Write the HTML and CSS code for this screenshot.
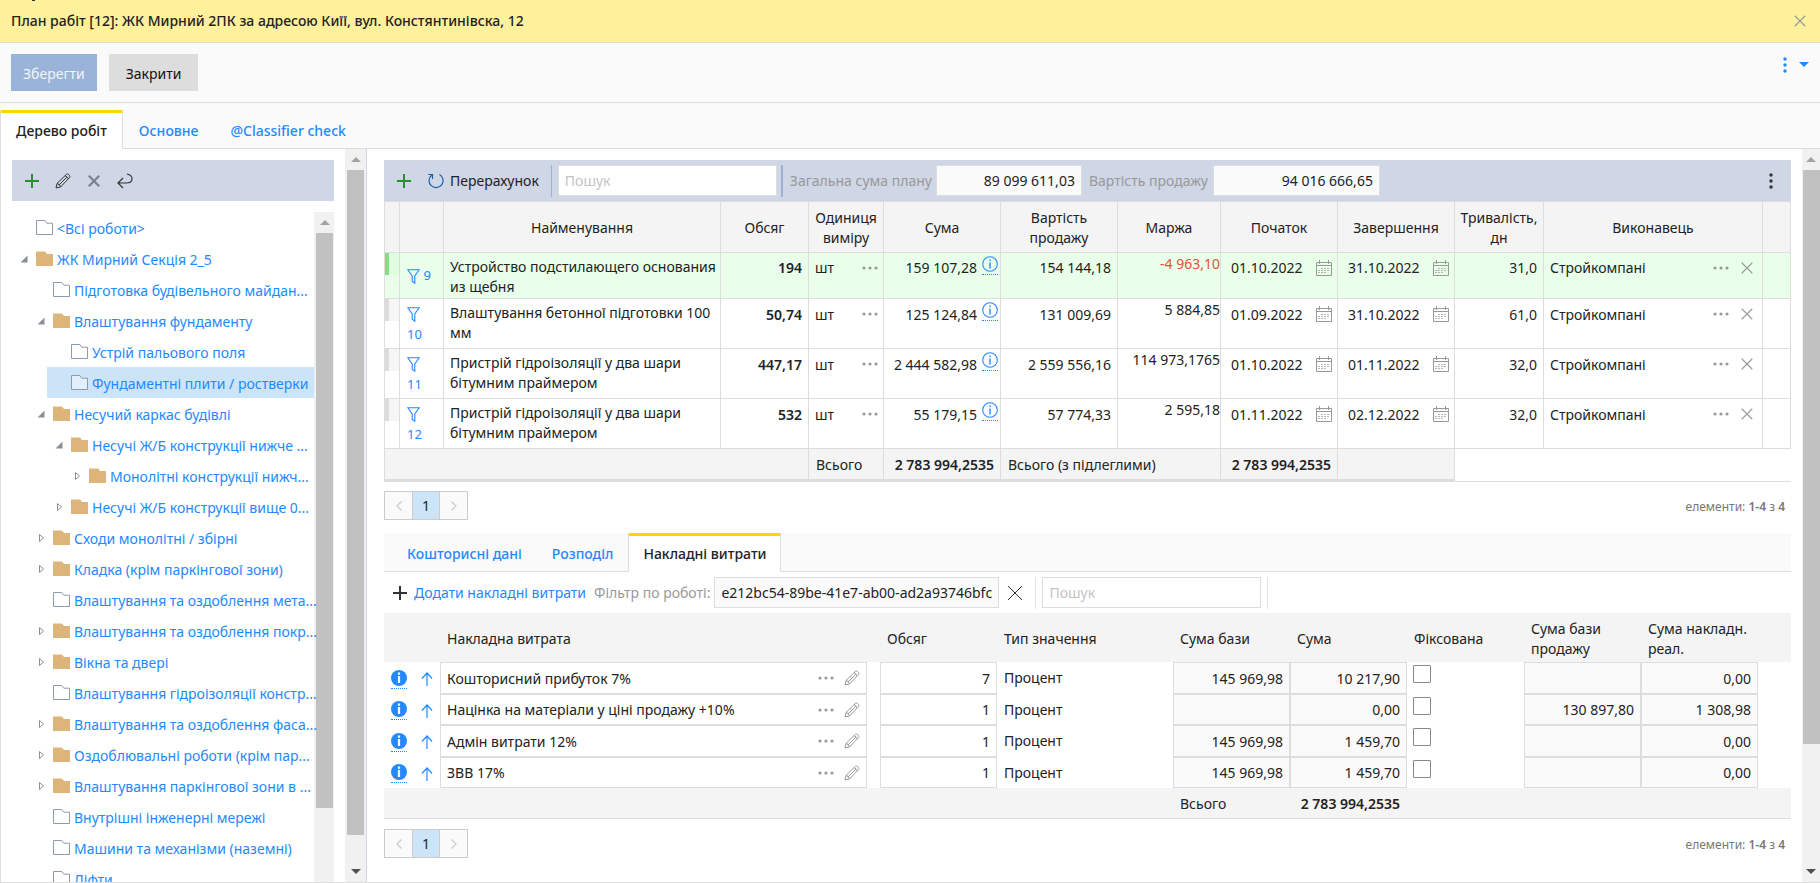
FILE: index.html
```html
<!DOCTYPE html>
<html lang="uk">
<head>
<meta charset="utf-8">
<title>План рабіт [12]</title>
<link rel="stylesheet" href="styles.css">
</head>
<body>
<svg class="sprite" aria-hidden="true">
  <symbol id="plus" viewBox="0 0 16 16"><path d="M8 1v14M1 8h14" fill="none" stroke="currentColor" stroke-width="2"/></symbol>
  <symbol id="pencil" viewBox="0 0 16 16"><path d="M1 15l1-4.500L11.500 1.200c1.300-1 4.200 1.600 3.200 3.200L5.500 14 1 15zM2 10.500c1.500.3 3 1.800 3.500 3.500M10 2.800c1.500.3 3 1.800 3.400 3.200M3.800 12.200l8-8" fill="none" stroke="currentColor"/></symbol>
  <symbol id="cross" viewBox="0 0 16 16"><path d="M1 1l14 14M15 1L1 15" fill="none" stroke="currentColor"/></symbol>
  <symbol id="back" viewBox="0 0 16 16"><path d="M6 5L1 10l5 5M1 10h8.500c7 0 7.500-7.500.5-9" fill="none" stroke="currentColor" stroke-width="1.200"/></symbol>
  <symbol id="refresh" viewBox="0 0 16 16"><path d="M11.500 1.500a7 7 0 1 1-7.500.4M4.500 6V1.500H.3" fill="none" stroke="currentColor" stroke-width="1.200"/></symbol>
  <symbol id="folder" viewBox="0 0 17 15"><path d="M.5 14.500V.5h8.300l2 2.700h5.700v11.300z" fill="#fff" fill-opacity=".4" stroke="#8f9bab"/></symbol>
  <symbol id="folder-full" viewBox="0 0 17 15"><path d="M0 15V.5h9l2 2.500h6v12z" fill="#ddb57a"/></symbol>
  <symbol id="open" viewBox="0 0 8 8"><path d="M7.500.5v7H.5z" fill="#8a8f98"/></symbol>
  <symbol id="closed" viewBox="0 0 8 8"><path d="M2.500.5v7L6.500 4z" fill="#fff" stroke="#8a8f98"/></symbol>
  <symbol id="filter" viewBox="0 0 13 15"><path d="M.8.800h11.400L7.800 7v7.200l-2.600-2V7z" fill="none" stroke="currentColor" stroke-width="1.100"/></symbol>
  <symbol id="info" viewBox="0 0 16 16"><circle cx="8" cy="8" r="7.300" fill="none" stroke="currentColor" stroke-width="1.100"/><path d="M8 3.500v1.700M8 6.500v6" stroke="currentColor" stroke-width="1.400"/></symbol>
  <symbol id="info-full" viewBox="0 0 16 16"><circle cx="8" cy="8" r="8" fill="currentColor"/><path d="M8 2.500v2.300M8 6v7" stroke="#fff" stroke-width="2.200"/></symbol>
  <symbol id="dots" viewBox="0 0 16 4"><circle cx="2" cy="2" r="1.600" fill="currentColor"/><circle cx="8" cy="2" r="1.600" fill="currentColor"/><circle cx="14" cy="2" r="1.600" fill="currentColor"/></symbol>
  <symbol id="vdots" viewBox="0 0 4 16"><circle cx="2" cy="2" r="1.700" fill="currentColor"/><circle cx="2" cy="8" r="1.700" fill="currentColor"/><circle cx="2" cy="14" r="1.700" fill="currentColor"/></symbol>
  <symbol id="cal" viewBox="0 0 16 16"><path d="M.5 2.500h15v13H.5zM.5 5.500h15M3.500 0v4M12.500 0v4" fill="none" stroke="currentColor"/><path d="M5 8.500h9M2 10.500h12M2 12.500h8" fill="none" stroke="currentColor" stroke-opacity=".7" stroke-dasharray="2 1"/></symbol>
  <symbol id="up" viewBox="0 0 12 14"><path d="M6 14V1M1 6.500l5-5.500 5 5.500" fill="none" stroke="currentColor" stroke-width="1.200"/></symbol>
  <symbol id="left" viewBox="0 0 6 10"><path d="M5.500.5L1 5l4.500 4.500" fill="none" stroke="currentColor" stroke-width="1.300"/></symbol>
  <symbol id="right" viewBox="0 0 6 10"><path d="M.5.5L5 5 .5 9.500" fill="none" stroke="currentColor" stroke-width="1.300"/></symbol>
</svg>
<header class="title-bar">
  <h1>План рабіт [12]: ЖК Мирний 2ПК за адресою Киїї, вул. Констянтинівска, 12</h1>
  <button class="icon-btn muted" aria-label="Закрити вікно"><svg class="i12"><use href="#cross"/></svg></button>
</header>
<div class="actions">
  <button class="btn primary">Зберегти</button>
  <button class="btn">Закрити</button>
  <button class="icon-btn menu" aria-label="Меню"><svg class="vd"><use href="#vdots"/></svg><span class="caret"></span></button>
</div>
<nav class="tabs main-tabs">
  <button class="tab active">Дерево робіт</button>
  <button class="tab">Основне</button>
  <button class="tab">@Classifier check</button>
</nav>
<div class="workspace">
  <aside class="side">
    <div class="side-body">
      <div class="toolbar side-tools">
        <button class="icon-btn green" aria-label="Додати"><svg class="i16"><use href="#plus"/></svg></button>
        <button class="icon-btn" aria-label="Редагувати"><svg class="i16"><use href="#pencil"/></svg></button>
        <button class="icon-btn gray" aria-label="Видалити"><svg class="i12 bold"><use href="#cross"/></svg></button>
        <button class="icon-btn" aria-label="Повернути"><svg class="i16"><use href="#back"/></svg></button>
      </div>
      <div class="tree-box">
        <ul class="tree">
          <li class="l0"><span class="tg"></span><svg class="fo"><use href="#folder"/></svg><a href="#">&lt;Всі роботи&gt;</a></li>
          <li class="l0"><svg class="tg"><use href="#open"/></svg><svg class="fo"><use href="#folder-full"/></svg><a href="#">ЖК Мирний Секція 2_5</a></li>
          <li class="l1"><span class="tg"></span><svg class="fo"><use href="#folder"/></svg><a href="#">Підготовка будівельного майдан...</a></li>
          <li class="l1"><svg class="tg"><use href="#open"/></svg><svg class="fo"><use href="#folder-full"/></svg><a href="#">Влаштування фундаменту</a></li>
          <li class="l2"><span class="tg"></span><svg class="fo"><use href="#folder"/></svg><a href="#">Устрій пальового поля</a></li>
          <li class="l2 selected"><span class="tg"></span><svg class="fo"><use href="#folder"/></svg><a href="#">Фундаментні плити / ростверки</a></li>
          <li class="l1"><svg class="tg"><use href="#open"/></svg><svg class="fo"><use href="#folder-full"/></svg><a href="#">Несучий каркас будівлі</a></li>
          <li class="l2"><svg class="tg"><use href="#open"/></svg><svg class="fo"><use href="#folder-full"/></svg><a href="#">Несучі Ж/Б конструкції нижче ...</a></li>
          <li class="l3"><svg class="tg"><use href="#closed"/></svg><svg class="fo"><use href="#folder-full"/></svg><a href="#">Монолітні конструкції нижч...</a></li>
          <li class="l2"><svg class="tg"><use href="#closed"/></svg><svg class="fo"><use href="#folder-full"/></svg><a href="#">Несучі Ж/Б конструкції вище 0...</a></li>
          <li class="l1"><svg class="tg"><use href="#closed"/></svg><svg class="fo"><use href="#folder-full"/></svg><a href="#">Сходи монолітні / збірні</a></li>
          <li class="l1"><svg class="tg"><use href="#closed"/></svg><svg class="fo"><use href="#folder-full"/></svg><a href="#">Кладка (крім паркінгової зони)</a></li>
          <li class="l1"><span class="tg"></span><svg class="fo"><use href="#folder"/></svg><a href="#">Влаштування та оздоблення мета...</a></li>
          <li class="l1"><svg class="tg"><use href="#closed"/></svg><svg class="fo"><use href="#folder-full"/></svg><a href="#">Влаштування та оздоблення покр...</a></li>
          <li class="l1"><svg class="tg"><use href="#closed"/></svg><svg class="fo"><use href="#folder-full"/></svg><a href="#">Вікна та двері</a></li>
          <li class="l1"><span class="tg"></span><svg class="fo"><use href="#folder"/></svg><a href="#">Влаштування гідроізоляції констр...</a></li>
          <li class="l1"><svg class="tg"><use href="#closed"/></svg><svg class="fo"><use href="#folder-full"/></svg><a href="#">Влаштування та оздоблення фаса...</a></li>
          <li class="l1"><svg class="tg"><use href="#closed"/></svg><svg class="fo"><use href="#folder-full"/></svg><a href="#">Оздоблювальні роботи (крім пар...</a></li>
          <li class="l1"><svg class="tg"><use href="#closed"/></svg><svg class="fo"><use href="#folder-full"/></svg><a href="#">Влаштування паркінгової зони в ...</a></li>
          <li class="l1"><span class="tg"></span><svg class="fo"><use href="#folder"/></svg><a href="#">Внутрішні інженерні мережі</a></li>
          <li class="l1"><span class="tg"></span><svg class="fo"><use href="#folder"/></svg><a href="#">Машини та механізми (наземні)</a></li>
          <li class="l1"><span class="tg"></span><svg class="fo"><use href="#folder"/></svg><a href="#">Ліфти</a></li>
        </ul>
        <div class="scroll tree-scroll"><span class="sb-up"></span><span class="thumb" style="flex-grow:85"></span><span class="rest" style="flex-grow:11"></span></div>
      </div>
    </div>
    <div class="scroll side-scroll"><span class="sb-up"></span><span class="thumb" style="flex-grow:663"></span><span class="rest" style="flex-grow:26"></span><span class="sb-down"></span></div>
  </aside>
  <main class="main">
    <div class="toolbar grid-tools">
      <button class="icon-btn green" aria-label="Додати роботу"><svg class="i16"><use href="#plus"/></svg></button>
      <button class="icon-btn recalc"><svg class="i16"><use href="#refresh"/></svg>Перерахунок</button>
      <span class="sep"></span>
      <input class="field search" placeholder="Пошук" aria-label="Пошук">
      <span class="sep"></span>
      <label class="total-label" for="plan">Загальна сума плану</label>
      <input class="field total-a" id="plan" value="89 099 611,03" readonly>
      <label class="total-label" for="sale">Вартість продажу</label>
      <input class="field total-b" id="sale" value="94 016 666,65" readonly>
      <button class="icon-btn more" aria-label="Ще"><svg class="vd"><use href="#vdots"/></svg></button>
    </div>
    <div class="grid-wrap">
    <table class="works">
      <colgroup><col class="w16"><col class="w44"><col><col class="w88"><col class="w75"><col class="w117"><col class="w117"><col class="w103"><col class="w117"><col class="w117"><col class="w89"><col class="w219"><col class="w28"></colgroup>
      <thead><tr><th></th><th></th><th>Найменування</th><th>Обсяг</th><th>Одиниця виміру</th><th>Сума</th><th>Вартість продажу</th><th>Маржа</th><th>Початок</th><th>Завершення</th><th>Тривалість, дн</th><th>Виконавець</th><th></th></tr></thead>
      <tbody>
        <tr class="current"><td><div class="mark"></div></td><td class="num"><a href="#"><svg class="fi"><use href="#filter"/></svg> 9</a></td><td class="name">Устройство подстилающего основания из щебня</td>
          <td><input class="cell r b" value="194" aria-label="Обсяг"></td><td><div class="pick"><input class="cell" value="шт" aria-label="Одиниця"><button class="icon-btn muted" aria-label="Вибрати"><svg class="dt"><use href="#dots"/></svg></button></div></td>
          <td><div class="pick"><input class="cell r" value="159 107,28" aria-label="Сума"><a class="hint" href="#" aria-label="Деталі"><svg class="i16"><use href="#info"/></svg></a></div></td><td><input class="cell r" value="154 144,18" aria-label="Вартість продажу"></td><td class="margin neg">-4 963,10</td>
          <td><div class="pick date"><input class="cell" value="01.10.2022" aria-label="Початок"><button class="icon-btn muted" aria-label="Календар"><svg class="i16"><use href="#cal"/></svg></button></div></td><td><div class="pick date"><input class="cell" value="31.10.2022" aria-label="Завершення"><button class="icon-btn muted" aria-label="Календар"><svg class="i16"><use href="#cal"/></svg></button></div></td>
          <td><input class="cell r" value="31,0" aria-label="Тривалість"></td><td><div class="pick who"><input class="cell" value="Стройкомпані" aria-label="Виконавець"><button class="icon-btn muted" aria-label="Вибрати"><svg class="dt"><use href="#dots"/></svg></button><button class="icon-btn muted" aria-label="Очистити"><svg class="i12"><use href="#cross"/></svg></button></div></td><td></td></tr>
        <tr><td><div class="mark"></div></td><td class="num"><a href="#"><svg class="fi"><use href="#filter"/></svg> 10</a></td><td class="name">Влаштування бетонної підготовки 100 мм</td>
          <td><input class="cell r b" value="50,74" aria-label="Обсяг"></td><td><div class="pick"><input class="cell" value="шт" aria-label="Одиниця"><button class="icon-btn muted" aria-label="Вибрати"><svg class="dt"><use href="#dots"/></svg></button></div></td>
          <td><div class="pick"><input class="cell r" value="125 124,84" aria-label="Сума"><a class="hint" href="#" aria-label="Деталі"><svg class="i16"><use href="#info"/></svg></a></div></td><td><input class="cell r" value="131 009,69" aria-label="Вартість продажу"></td><td class="margin">5 884,85</td>
          <td><div class="pick date"><input class="cell" value="01.09.2022" aria-label="Початок"><button class="icon-btn muted" aria-label="Календар"><svg class="i16"><use href="#cal"/></svg></button></div></td><td><div class="pick date"><input class="cell" value="31.10.2022" aria-label="Завершення"><button class="icon-btn muted" aria-label="Календар"><svg class="i16"><use href="#cal"/></svg></button></div></td>
          <td><input class="cell r" value="61,0" aria-label="Тривалість"></td><td><div class="pick who"><input class="cell" value="Стройкомпані" aria-label="Виконавець"><button class="icon-btn muted" aria-label="Вибрати"><svg class="dt"><use href="#dots"/></svg></button><button class="icon-btn muted" aria-label="Очистити"><svg class="i12"><use href="#cross"/></svg></button></div></td><td></td></tr>
        <tr><td><div class="mark"></div></td><td class="num"><a href="#"><svg class="fi"><use href="#filter"/></svg> 11</a></td><td class="name">Пристрій гідроізоляції у два шари бітумним праймером</td>
          <td><input class="cell r b" value="447,17" aria-label="Обсяг"></td><td><div class="pick"><input class="cell" value="шт" aria-label="Одиниця"><button class="icon-btn muted" aria-label="Вибрати"><svg class="dt"><use href="#dots"/></svg></button></div></td>
          <td><div class="pick"><input class="cell r" value="2 444 582,98" aria-label="Сума"><a class="hint" href="#" aria-label="Деталі"><svg class="i16"><use href="#info"/></svg></a></div></td><td><input class="cell r" value="2 559 556,16" aria-label="Вартість продажу"></td><td class="margin">114 973,1765</td>
          <td><div class="pick date"><input class="cell" value="01.10.2022" aria-label="Початок"><button class="icon-btn muted" aria-label="Календар"><svg class="i16"><use href="#cal"/></svg></button></div></td><td><div class="pick date"><input class="cell" value="01.11.2022" aria-label="Завершення"><button class="icon-btn muted" aria-label="Календар"><svg class="i16"><use href="#cal"/></svg></button></div></td>
          <td><input class="cell r" value="32,0" aria-label="Тривалість"></td><td><div class="pick who"><input class="cell" value="Стройкомпані" aria-label="Виконавець"><button class="icon-btn muted" aria-label="Вибрати"><svg class="dt"><use href="#dots"/></svg></button><button class="icon-btn muted" aria-label="Очистити"><svg class="i12"><use href="#cross"/></svg></button></div></td><td></td></tr>
        <tr><td><div class="mark"></div></td><td class="num"><a href="#"><svg class="fi"><use href="#filter"/></svg> 12</a></td><td class="name">Пристрій гідроізоляції у два шари бітумним праймером</td>
          <td><input class="cell r b" value="532" aria-label="Обсяг"></td><td><div class="pick"><input class="cell" value="шт" aria-label="Одиниця"><button class="icon-btn muted" aria-label="Вибрати"><svg class="dt"><use href="#dots"/></svg></button></div></td>
          <td><div class="pick"><input class="cell r" value="55 179,15" aria-label="Сума"><a class="hint" href="#" aria-label="Деталі"><svg class="i16"><use href="#info"/></svg></a></div></td><td><input class="cell r" value="57 774,33" aria-label="Вартість продажу"></td><td class="margin">2 595,18</td>
          <td><div class="pick date"><input class="cell" value="01.11.2022" aria-label="Початок"><button class="icon-btn muted" aria-label="Календар"><svg class="i16"><use href="#cal"/></svg></button></div></td><td><div class="pick date"><input class="cell" value="02.12.2022" aria-label="Завершення"><button class="icon-btn muted" aria-label="Календар"><svg class="i16"><use href="#cal"/></svg></button></div></td>
          <td><input class="cell r" value="32,0" aria-label="Тривалість"></td><td><div class="pick who"><input class="cell" value="Стройкомпані" aria-label="Виконавець"><button class="icon-btn muted" aria-label="Вибрати"><svg class="dt"><use href="#dots"/></svg></button><button class="icon-btn muted" aria-label="Очистити"><svg class="i12"><use href="#cross"/></svg></button></div></td><td></td></tr>
      </tbody>
      <tfoot><tr><td colspan="4"></td><td>Всього</td><td class="b sum">2 783 994,2535</td><td colspan="2">Всього (з підлеглими)</td><td class="b sum">2 783 994,2535</td><td></td><td class="none" colspan="3"></td></tr></tfoot>
    </table>
    </div>
    <div class="pager"><div class="pages"><button aria-label="Назад" disabled><svg class="ar"><use href="#left"/></svg></button><button class="on">1</button><button aria-label="Вперед" disabled><svg class="ar"><use href="#right"/></svg></button></div><p>елементи: <b>1-4</b> з <b>4</b></p></div>
    <nav class="tabs sub-tabs">
      <button class="tab">Кошторисні дані</button>
      <button class="tab">Розподіл</button>
      <button class="tab active">Накладні витрати</button>
    </nav>
    <div class="cost-tools">
      <button class="icon-btn add"><svg class="i16"><use href="#plus"/></svg><span>Додати накладні витрати</span></button>
      <label for="flt">Фільтр по роботі:</label>
      <input class="field filter" id="flt" value="e212bc54-89be-41e7-ab00-ad2a93746bfc" readonly>
      <button class="icon-btn" aria-label="Очистити фільтр"><svg class="i16"><use href="#cross"/></svg></button>
      <span class="sep light"></span>
      <input class="field search" placeholder="Пошук" aria-label="Пошук витрат">
      <span class="sep light"></span>
    </div>
    <table class="costs">
      <colgroup><col class="w56"><col><col class="w117"><col class="w176"><col class="w117"><col class="w117"><col class="w117"><col class="w117"><col class="w117"><col class="w33"></colgroup>
      <thead><tr><th></th><th>Накладна витрата</th><th>Обсяг</th><th>Тип значення</th><th>Сума бази</th><th>Сума</th><th>Фіксована</th><th>Сума бази продажу</th><th>Сума накладн. реал.</th><th></th></tr></thead>
      <tbody>
        <tr><td><div class="lead"><a class="hint" href="#" aria-label="Деталі"><svg class="i16"><use href="#info-full"/></svg></a><a href="#" aria-label="Вгору"><svg class="up"><use href="#up"/></svg></a></div></td><td class="nm"><div class="box"><input class="cell" value="Кошторисний прибуток 7%" aria-label="Витрата"><button class="icon-btn muted" aria-label="Вибрати"><svg class="dt"><use href="#dots"/></svg></button><button class="icon-btn muted" aria-label="Редагувати"><svg class="i16"><use href="#pencil"/></svg></button></div></td><td><input class="box r" value="7" aria-label="Обсяг"></td><td class="type">Процент</td><td><input class="box ro r" value="145 969,98" aria-label="Сума бази" readonly></td><td><input class="box ro r" value="10 217,90" aria-label="Сума" readonly></td><td class="ck"><input type="checkbox" aria-label="Фіксована"></td><td><input class="box ro r" aria-label="Сума бази продажу" readonly></td><td><input class="box ro r" value="0,00" aria-label="Сума накладних" readonly></td><td></td></tr>
        <tr><td><div class="lead"><a class="hint" href="#" aria-label="Деталі"><svg class="i16"><use href="#info-full"/></svg></a><a href="#" aria-label="Вгору"><svg class="up"><use href="#up"/></svg></a></div></td><td class="nm"><div class="box"><input class="cell" value="Націнка на матеріали у ціні продажу +10%" aria-label="Витрата"><button class="icon-btn muted" aria-label="Вибрати"><svg class="dt"><use href="#dots"/></svg></button><button class="icon-btn muted" aria-label="Редагувати"><svg class="i16"><use href="#pencil"/></svg></button></div></td><td><input class="box r" value="1" aria-label="Обсяг"></td><td class="type">Процент</td><td><input class="box ro r" aria-label="Сума бази" readonly></td><td><input class="box ro r" value="0,00" aria-label="Сума" readonly></td><td class="ck"><input type="checkbox" aria-label="Фіксована"></td><td><input class="box ro r" value="130 897,80" aria-label="Сума бази продажу" readonly></td><td><input class="box ro r" value="1 308,98" aria-label="Сума накладних" readonly></td><td></td></tr>
        <tr><td><div class="lead"><a class="hint" href="#" aria-label="Деталі"><svg class="i16"><use href="#info-full"/></svg></a><a href="#" aria-label="Вгору"><svg class="up"><use href="#up"/></svg></a></div></td><td class="nm"><div class="box"><input class="cell" value="Адмін витрати 12%" aria-label="Витрата"><button class="icon-btn muted" aria-label="Вибрати"><svg class="dt"><use href="#dots"/></svg></button><button class="icon-btn muted" aria-label="Редагувати"><svg class="i16"><use href="#pencil"/></svg></button></div></td><td><input class="box r" value="1" aria-label="Обсяг"></td><td class="type">Процент</td><td><input class="box ro r" value="145 969,98" aria-label="Сума бази" readonly></td><td><input class="box ro r" value="1 459,70" aria-label="Сума" readonly></td><td class="ck"><input type="checkbox" aria-label="Фіксована"></td><td><input class="box ro r" aria-label="Сума бази продажу" readonly></td><td><input class="box ro r" value="0,00" aria-label="Сума накладних" readonly></td><td></td></tr>
        <tr><td><div class="lead"><a class="hint" href="#" aria-label="Деталі"><svg class="i16"><use href="#info-full"/></svg></a><a href="#" aria-label="Вгору"><svg class="up"><use href="#up"/></svg></a></div></td><td class="nm"><div class="box"><input class="cell" value="ЗВВ 17%" aria-label="Витрата"><button class="icon-btn muted" aria-label="Вибрати"><svg class="dt"><use href="#dots"/></svg></button><button class="icon-btn muted" aria-label="Редагувати"><svg class="i16"><use href="#pencil"/></svg></button></div></td><td><input class="box r" value="1" aria-label="Обсяг"></td><td class="type">Процент</td><td><input class="box ro r" value="145 969,98" aria-label="Сума бази" readonly></td><td><input class="box ro r" value="1 459,70" aria-label="Сума" readonly></td><td class="ck"><input type="checkbox" aria-label="Фіксована"></td><td><input class="box ro r" aria-label="Сума бази продажу" readonly></td><td><input class="box ro r" value="0,00" aria-label="Сума накладних" readonly></td><td></td></tr>
      </tbody>
      <tfoot><tr><td colspan="4"></td><td>Всього</td><td class="b sum">2 783 994,2535</td><td colspan="4"></td></tr></tfoot>
    </table>
    <div class="pager"><div class="pages"><button aria-label="Назад" disabled><svg class="ar"><use href="#left"/></svg></button><button class="on">1</button><button aria-label="Вперед" disabled><svg class="ar"><use href="#right"/></svg></button></div><p>елементи: <b>1-4</b> з <b>4</b></p></div>
  </main>
  <div class="scroll main-scroll"><span class="sb-up"></span><span class="thumb" style="flex-grow:572"></span><span class="rest" style="flex-grow:117"></span><span class="sb-down"></span></div>
</div>
</body>
</html>
```

FILE: styles.css
```css
* { box-sizing: border-box; }
body {
  margin: 0;
  height: 100vh;
  display: flex;
  flex-direction: column;
  overflow: hidden;
  background: #fff;
  color: #222;
  font: 14px/20px "Noto Sans", "Open Sans", sans-serif;
}
button, input { font: inherit; color: inherit; margin: 0; }
button { border: 0; background: none; padding: 0; }
a { color: #2489ff; text-decoration: none; }
svg { display: block; flex: none; }
.sprite { position: absolute; width: 0; height: 0; }
.i12 { width: 12px; height: 12px; stroke-width: 1.5px; }
.i16 { width: 16px; height: 16px; }
.bold { stroke-width: 3px; }
.vd { width: 4px; height: 16px; }
.dt { width: 16px; height: 4px; }
.fi { width: 13px; height: 15px; }
.ar { width: 6px; height: 10px; }
.up { width: 12px; height: 14px; }
.icon-btn { display: flex; align-items: center; flex: none; color: #333; }
.green { color: #2b8f2b; }
.gray { color: #7c828c; }
.muted { color: #999; }
.b { font-weight: 600; }
.r { text-align: right; }

.title-bar {
  display: flex;
  align-items: center;
  justify-content: space-between;
  flex: none;
  height: 43px;
  padding: 0 14px 0 11px;
  background: linear-gradient(#333, #333) 32px 0 / 3px 1px no-repeat #fff09c;
  border-bottom: 1px solid #ddd;
}
.title-bar h1 { margin: 0; font-size: 14px; line-height: 20px; font-weight: 500; }
.actions {
  display: flex;
  align-items: flex-start;
  gap: 12px;
  flex: none;
  height: 60px;
  padding: 11px;
  background: #fafafa;
  border-bottom: 1px solid #ddd;
}
.btn { height: 37px; padding: 2px 17px 0; background: #ddd; color: #111; }
.primary { padding: 2px 12px 0; background: #99b4d8; color: #f1f5fa; }
.menu { margin-left: auto; gap: 12px; height: 21px; color: #2489ff; }
.caret { border: 5px solid transparent; border-top-color: #2489ff; border-bottom: 0; }

.tabs { display: flex; align-items: flex-end; background: #fafafa; box-shadow: inset 0 -1px #ddd; flex: none; }
.tab { height: 38px; padding: 2px 15px 0; color: #2489ff; font-weight: 500; }
.tab.active { height: 39px; padding: 2px 14px 0; color: #222; background: #fff; border: solid #ddd; border-width: 0 1px; box-shadow: inset 0 3px #ffd500; }
.main-tabs { height: 46px; }
.main-tabs .tab { padding: 2px 16px 0; }
.main-tabs .tab.active { padding: 2px 15px 0; }
.sub-tabs { height: 39px; margin-top: 13px; padding-left: 8px; }

.workspace { flex: 1; min-height: 0; display: flex; border: solid #ddd; border-width: 0 0 1px 1px; }
.side { display: flex; flex: none; width: 366px; border-right: 1px solid #cfd6e6; }
.side-body { flex: 1; display: flex; flex-direction: column; min-width: 0; padding: 11px 11px 0 11px; }
.toolbar { display: flex; align-items: center; flex: none; height: 41px; background: #cfd6e6; }
.side-tools { padding: 0 12px; gap: 15px; }
.side-tools .icon-btn { width: 16px; justify-content: center; }
.tree-box { flex: 1; min-height: 0; display: flex; margin-top: 11px; }
.tree { position: relative; flex: 1; min-width: 0; overflow: hidden; margin: 0 -3px 0 0; padding: 0; list-style: none; }
.tree li { display: flex; align-items: center; height: 31px; white-space: nowrap; }
.tree a { padding-top: 2px; }
.tree .tg { width: 8px; height: 8px; margin: 0 8px 0 8px; flex: none; }
.tree .fo { width: 17px; height: 15px; margin-right: 4px; }
.tree .l1 { margin-left: 17px; }
.tree .l2 { margin-left: 35px; }
.tree .l3 { margin-left: 53px; }
.tree .selected { margin-right: 3px; background: #cce4f7; }

.scroll { display: flex; flex-direction: column; align-items: center; flex: none; width: 21px; background: #f1f1f1; }
.scroll .thumb { flex-basis: 0; width: 17px; background: #c1c1c1; }
.scroll .rest { flex-basis: 0; }
.sb-up, .sb-down { display: flex; align-items: center; justify-content: center; flex: none; height: 21px; }
.sb-up::before { content: ""; border: 5px solid transparent; border-bottom-color: #a3a3a3; border-top: 0; }
.sb-down::before { content: ""; border: 5px solid transparent; border-top-color: #505050; border-bottom: 0; }
.tree-scroll { width: 20px; padding-left: 1px; }
.main-scroll { width: 18px; }

.main { flex: 1; min-width: 0; padding: 11px 11px 0 17px; }
.field { height: 31px; min-width: 0; padding: 0 6px; border: 1px solid #ddd; background: #fff; outline: 0; }
.field[readonly] { background: #fafafa; }
.field::placeholder { color: #c4c4c4; }
.search { width: 219px; }
.sep { width: 1px; height: 32px; background: #9fb0d2; flex: none; }
.sep.light { background: #dfe3ec; }
.grid-tools { padding: 0 18px 0 12px; }
.grid-tools .search + .sep { width: 2px; }
.recalc { gap: 6px; margin: 0 12px 0 16px; color: #222; }
.recalc svg { color: #1c5fa8; }
.grid-tools .search { margin: 0 4px 0 6px; }
.total-label { color: #999; margin-left: 7px; flex: none; }
.total-a { width: 146px; margin-left: 4px; text-align: right; }
.total-b { width: 167px; margin-left: 5px; text-align: right; }
.more { margin-left: auto; }

table { width: 100%; table-layout: fixed; border-spacing: 0; }
th, td { padding: 0; font-weight: 400; }
.w16 { width: 16px; } .w28 { width: 28px; } .w33 { width: 33px; } .w44 { width: 44px; } .w56 { width: 56px; }
.w75 { width: 75px; } .w88 { width: 88px; } .w89 { width: 89px; } .w103 { width: 103px; }
.w117 { width: 117px; } .w176 { width: 176px; } .w219 { width: 219px; }
.grid-wrap { border-bottom: 1px solid #ddd; }
.works { border-top: 1px solid #ddd; }
.works th { height: 51px; padding-top: 2px; background: #f4f4f4; border: solid #ddd; border-width: 0 1px 1px 0; }
.works td { height: 50px; vertical-align: top; border: solid #ddd; border-width: 0 1px 1px 0; }
.works tr > :first-child { border-left: 1px solid #ddd; }
.works .current td { height: 46px; background: #eaffea; }
.mark { height: 22px; border-left: 4px solid #ddd; background: #f6f6f6; }
.current .mark { border-color: #82e082; background: #dfffdf; }
.works .num { padding: 0 9px 0 7px; vertical-align: middle; font-size: 13px; line-height: 21px; }
.num a { display: block; }
.num .fi { display: inline-block; vertical-align: middle; }
.works .name { padding: 4px 0 0 6px; }
.cell { display: block; flex: 1; width: 100%; min-width: 0; height: 30px; padding: 0 6px; border: 0; background: none; outline: 0; }
.current .cell { height: 29px; }
.pick { display: flex; align-items: center; }
.pick .dt { margin-right: 5px; }
.pick .hint { align-self: flex-start; margin: 3px 2px 0 0; }
.pick .cell.r { padding-right: 5px; padding-left: 0; }
.hint { border-bottom: 1px dotted #2489ff; padding-bottom: 2px; }
.date { padding: 0 5px 0 4px; }
.who .dt { margin-right: 12px; }
.who .i12 { margin-right: 9px; }
.works .margin { padding: 1px 0 0; text-align: right; }
.works .neg { color: #e0503c; }
.works tfoot td { height: 32px; padding: 2px 6px 0 7px; vertical-align: middle; background: #f4f4f4; border-bottom: 2px solid #ddd; }
.works tfoot .none { background: #fff; border: 0; }
tfoot .sum { text-align: right; white-space: nowrap; }

.pager { display: flex; justify-content: space-between; align-items: center; height: 29px; margin-top: 9px; padding-right: 6px; color: #777; font-size: 12px; }
.pager p { margin: 0; padding-top: 2px; }
.pager b { font-weight: 600; }
.pages { display: flex; border: 1px solid #ccc; color: #222; font-size: 14px; }
.pages button { display: flex; align-items: center; justify-content: center; width: 27px; height: 27px; background: #fafafa; color: #ccc; }
.pages .on { width: 28px; color: #222; background: #cce4f7; border: solid #ccc; border-width: 0 1px; }

.cost-tools { display: flex; align-items: center; height: 41px; padding-left: 8px; color: #999; }
.add { gap: 6px; margin-right: 8px; }
.add span { color: #2489ff; }
.filter { width: 285px; margin: 0 8px 0 4px; color: #222; }
.cost-tools .sep { margin-left: 12px; }
.cost-tools .search { margin-left: 6px; }
.cost-tools .search + .sep { margin-left: 6px; }
.costs { margin-bottom: 10px; border-bottom: 1px solid #ddd; }
.costs + .pager { margin-top: 0; }
.costs th { height: 49px; padding: 2px 6px 0 7px; text-align: left; background: #f4f4f4; }
.costs tbody td { height: 31px; }
.costs tbody tr:nth-child(odd) td { height: 32px; }
.costs td .box { display: flex; align-items: center; width: 100%; height: 31px; padding: 0 6px; border: 1px solid #ddd; background: #fff; outline: 0; }
.costs tbody tr:nth-child(odd) .box { height: 32px; }
.costs td .ro { background: #fafafa; }
.costs .nm { padding-right: 13px; }
.nm .box .cell { padding: 0; }
.nm .dt { margin-right: 10px; }
.lead { display: flex; align-items: center; gap: 14px; padding: 2px 0 0 7px; }
.type { padding-left: 7px; }
.ck { padding-left: 6px; vertical-align: top; }
.ck input { display: block; appearance: none; width: 18px; height: 18px; margin-top: 3px; border: 1px solid #888; border-radius: 1px; background: #fff; }
.costs tfoot td { height: 30px; padding: 2px 7px 0; background: #f4f4f4; }
```
